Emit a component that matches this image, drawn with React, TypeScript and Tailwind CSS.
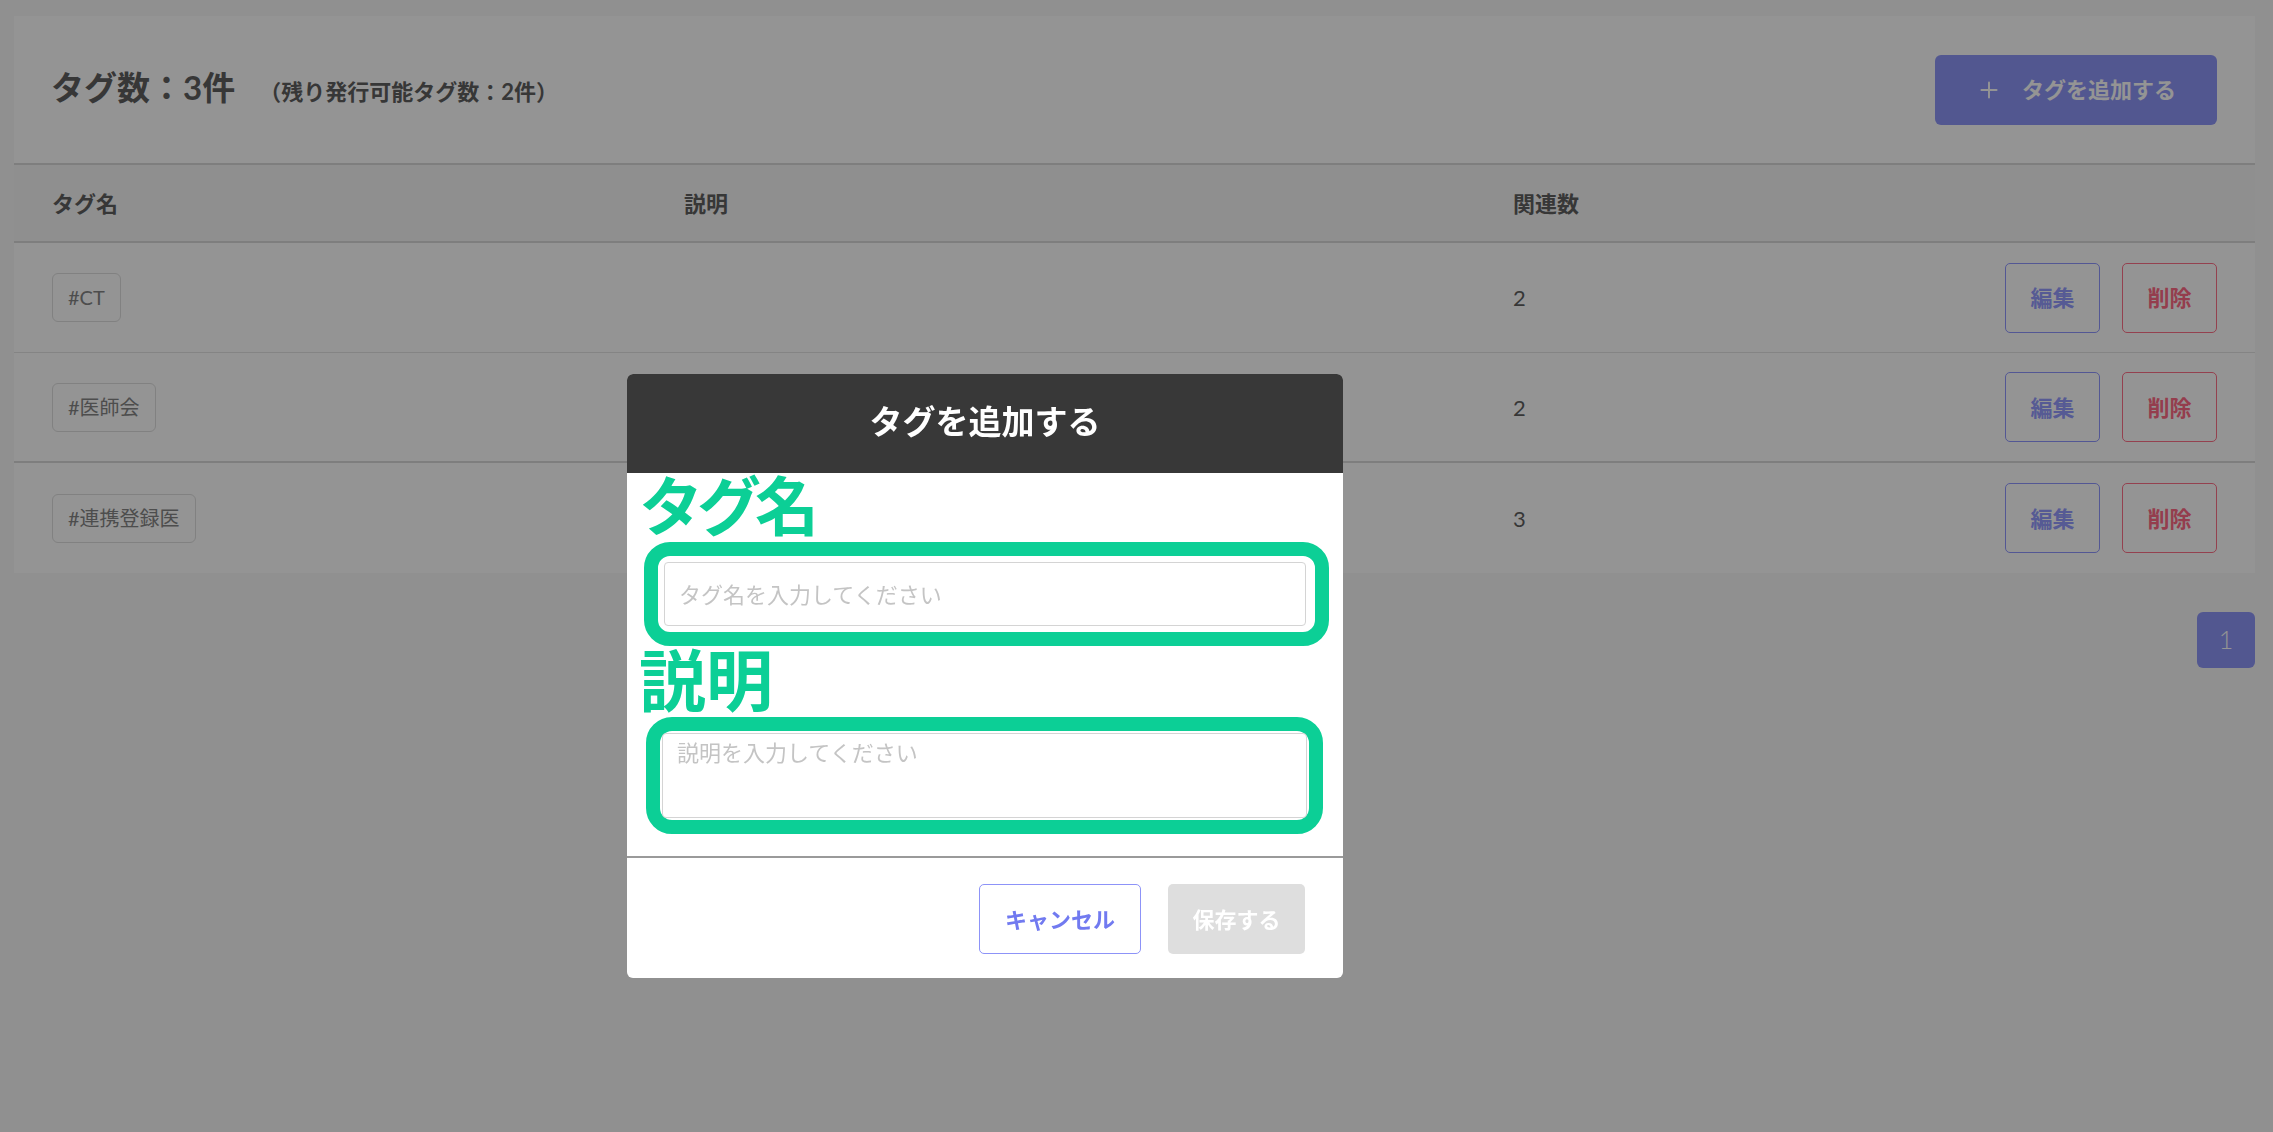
import React from 'react';
import { Plus } from 'lucide-react';

interface Tag {
  name: string;
  description: string;
  count: number;
}

const tags: Tag[] = [
  { name: '#CT', description: '', count: 2 },
  { name: '#医師会', description: '', count: 2 },
  { name: '#連携登録医', description: '', count: 3 },
];

const App: React.FC = () => {
  return (
    <div className="min-h-screen bg-[#f8f8f9] pl-[14px] pr-[18px] pt-[16px] font-['Lato','Noto_Sans_CJK_JP',sans-serif] text-[#5f5f5f]">
      {/* Tag list card */}
      <div className="bg-white">
        <div className="flex h-[149px] items-center justify-between border-b-2 border-[#dadada] pl-[37px] pr-[38px]">
          <div className="flex items-baseline gap-[24px]">
            <h2 className="text-[33px] font-bold leading-none">タグ数：3件</h2>
            <span className="text-[22px] font-bold">（残り発行可能タグ数：2件）</span>
          </div>
          <button className="flex h-[70px] w-[282px] items-center justify-center gap-[20px] rounded-[6px] bg-[#8e96f8] text-[22px] font-bold text-white">
            <Plus className="h-[26px] w-[26px]" strokeWidth={1.8} />
            <span>タグを追加する</span>
          </button>
        </div>

        {/* Table header */}
        <div className="grid h-[78px] grid-cols-[632px_829px_1fr] items-center border-b-2 border-[#dadada] bg-[#f7f7f7] pl-[38px] text-[22px] font-bold">
          <div>タグ名</div>
          <div>説明</div>
          <div>関連数</div>
        </div>

        {/* Rows */}
        {tags.map((tag, i) => (
          <div
            key={tag.name}
            className={`grid h-[110px] grid-cols-[632px_829px_1fr] items-center pl-[38px] pr-[38px] ${
              i === 0 ? 'border-b border-[#e4e4e4]' : i === 1 ? 'border-b-2 border-[#dadada]' : ''
            }`}
          >
            <div>
              <span className="inline-block rounded-[6px] border border-[#dedede] px-[15px] py-[10px] text-[20px] leading-[27px] text-[#858585]">
                {tag.name}
              </span>
            </div>
            <div className="text-[20px]">{tag.description}</div>
            <div className="flex items-center justify-between">
              <span className="text-[22px]">{tag.count}</span>
              <div className="flex gap-[22px]">
                <button className="h-[70px] w-[95px] rounded-[5px] border border-[#9097ff] text-[22px] font-bold text-[#949bff]">
                  編集
                </button>
                <button className="h-[70px] w-[95px] rounded-[5px] border border-[#ff7088] text-[22px] font-bold text-[#ff6a86]">
                  削除
                </button>
              </div>
            </div>
          </div>
        ))}
      </div>

      {/* Pagination */}
      <div className="mt-[39px] flex justify-end">
        <button className="h-[56px] w-[58px] rounded-[6px] bg-[#8e96f8] text-[25px] font-light text-white">1</button>
      </div>

      {/* Modal overlay */}
      <div className="fixed inset-0 bg-black/[0.42]" />

      <div className="fixed left-[627px] top-[374px] w-[716px] overflow-hidden rounded-[6px] bg-white">
        <div className="flex h-[99px] items-center justify-center bg-[#383838]">
          <h3 className="-mt-[3px] text-[33px] font-bold text-white">タグを追加する</h3>
        </div>

        <div className="px-[17px] pb-[22px]">
          <div className="-ml-[5px] mt-[1px] h-[68px] text-[64px] font-bold leading-none tracking-[-6px] text-[#0ccf96]">
            タグ名
          </div>
          <div className="flex h-[104px] w-[685px] items-center rounded-[26px] border-[14px] border-[#0ccf96] pl-[6px] pr-[9px]">
            <input
              className="h-[64px] w-full rounded-[4px] border border-[#d4d4d4] px-[14px] text-[22px] outline-none placeholder:text-[#c4c4c4]"
              placeholder="タグ名を入力してください"
            />
          </div>
          <div className="-ml-[5px] h-[71px] pt-[1px] text-[67px] font-bold leading-none text-[#0ccf96]">説明</div>
          <div className="ml-[2px] flex h-[117px] w-[677px] rounded-[26px] border-[14px] border-[#0ccf96] p-[2px]">
            <textarea
              className="h-full w-full resize-none rounded-[4px] border border-[#d4d4d4] px-[14px] py-[2px] text-[22px] outline-none placeholder:text-[#c4c4c4]"
              placeholder="説明を入力してください"
            />
          </div>
        </div>

        <div className="flex justify-end gap-[27px] border-t-2 border-[#9a9a9a] pb-[24px] pr-[38px] pt-[26px]">
          <button className="h-[70px] w-[162px] rounded-[5px] border border-[#8d93f8] bg-white text-[22px] font-bold text-[#717af0]">
            キャンセル
          </button>
          <button className="h-[70px] w-[137px] rounded-[5px] bg-[#dedede] text-[22px] font-bold text-white">
            保存する
          </button>
        </div>
      </div>
    </div>
  );
};

export default App;
